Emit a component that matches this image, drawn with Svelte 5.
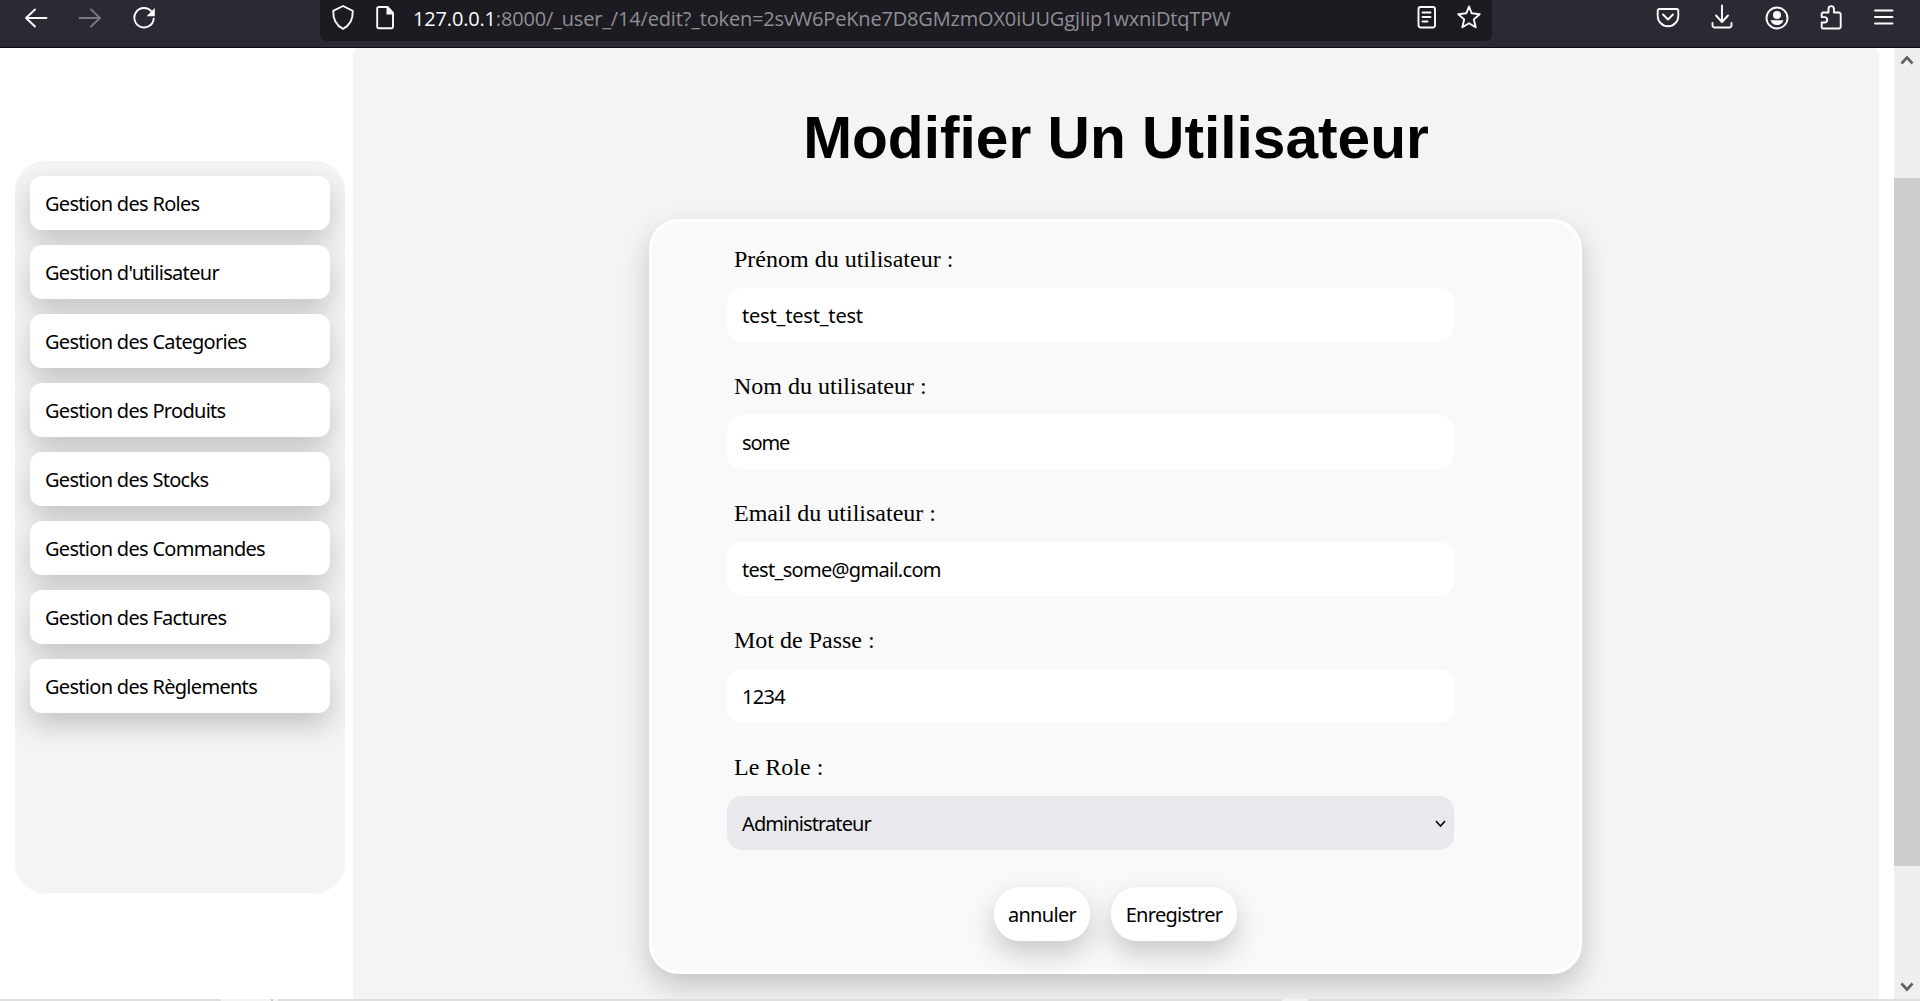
<script>
  const links = [
    'Gestion des Roles',
    "Gestion d'utilisateur",
    'Gestion des Categories',
    'Gestion des Produits',
    'Gestion des Stocks',
    'Gestion des Commandes',
    'Gestion des Factures',
    'Gestion des Règlements'
  ];

  let fields = $state([
    { id: 'prenom', label: 'Prénom du utilisateur :', value: 'test_test_test' },
    { id: 'nom', label: 'Nom du utilisateur :', value: 'some' },
    { id: 'email', label: 'Email du utilisateur :', value: 'test_some@gmail.com' },
    { id: 'passe', label: 'Mot de Passe :', value: '1234' }
  ]);
</script>

<div class="window">
  <header class="toolbar">
    <div class="nav">
      <svg width="24" height="26" viewBox="0 0 24 26"><path d="M22.500 13H2M11 4.500L2 13l9 8.500" /></svg>
      <svg class="dim" width="24" height="26" viewBox="0 0 24 26"><path d="M1.500 13H22M13 4.500L22 13l-9 8.500" /></svg>
      <svg width="24" height="26" viewBox="0 0 24 26">
        <path d="M19.500 6.500A9.700 9.700 0 1 0 21.700 13.800" />
        <path class="solid" d="M22.800 3v8.200h-8.200z" />
      </svg>
    </div>
    <div class="url">
      <svg width="24" height="26" viewBox="0 0 24 26"><path d="M12 2L21.800 6.800C22 15 19 21.500 12 24.800C5 21.500 2 15 2.200 6.800Z" /></svg>
      <svg class="page" width="20" height="26" viewBox="0 0 20 26">
        <path d="M4 3h8.500l5.500 6v13.500a1.800 1.800 0 0 1-1.800 1.800H4A1.800 1.800 0 0 1 2.200 22.500v-17.700A1.800 1.800 0 0 1 4 3z" />
        <path class="solid" d="M11.500 3v7.500H18.500z" />
      </svg>
      <span class="address"><b>127.0.0.1</b>:8000/_user_/14/edit?_token=2svW6PeKne7D8GMzmOX0iUUGgjIip1wxniDtqTPW</span>
      <svg width="20" height="26" viewBox="0 0 20 26">
        <rect x="1.500" y="3" width="16.500" height="20.500" rx="2.200" />
        <path d="M5.500 8.500h8M5.500 13h8M5.500 17.500h5" />
      </svg>
      <svg class="star" width="24" height="26" viewBox="0 0 24 26">
        <path d="M12 2.500L14.700 9.300L22.700 10.200L16.800 15.400L18.700 23.300L12 19.300L5.300 23.300L7.200 15.400L1.300 10.200L9.300 9.300Z" />
      </svg>
    </div>
    <div class="tools">
      <svg width="24" height="26" viewBox="0 0 24 26">
        <path d="M3.500 5h17a1.800 1.800 0 0 1 1.800 1.800V12a10.300 10.300 0 0 1-20.600 0V6.800A1.800 1.800 0 0 1 3.500 5z" />
        <path d="M7 10.500l5 5 5-5" />
      </svg>
      <svg width="24" height="26" viewBox="0 0 24 26"><path d="M11 1.500v16M5 11.500l6 6.500 6-6.500M1.500 19v2.200a2.300 2.300 0 0 0 2.300 2.300h14.400a2.300 2.300 0 0 0 2.300-2.300V19" /></svg>
      <svg width="24" height="26" viewBox="0 0 24 26">
        <circle cx="12" cy="14" r="10.500" />
        <circle class="fill" cx="12" cy="11" r="4" />
        <path class="fill" d="M5.500 16.200h13a6.800 6.800 0 0 1-13 0z" />
      </svg>
      <svg width="24" height="26" viewBox="0 0 24 26">
        <path d="M3 8.500h5.500V4.800a2.700 2.700 0 0 1 5.400 0v3.700h5a1.800 1.800 0 0 1 1.800 1.800v12.400a1.800 1.800 0 0 1-1.800 1.800H3a1.300 1.300 0 0 1-1.300-1.300V18.500h2.800a2.700 2.700 0 0 0 0-5.400H1.700V9.800A1.300 1.300 0 0 1 3 8.500z" />
      </svg>
      <svg width="20" height="26" viewBox="0 0 20 26"><path d="M1 6.500h17.500M1 13h17.500M1 19.500h17.500" /></svg>
    </div>
  </header>

  <div class="body">
    <aside>
      <nav class="menu">
        {#each links as link}
          <a href="#top">{link}</a>
        {/each}
      </nav>
    </aside>

    <main>
      <h1>Modifier Un Utilisateur</h1>
      <form>
        {#each fields as field}
          <div class="field">
            <label for={field.id}>{field.label}</label>
            <input id={field.id} class={field.id} type="text" bind:value={field.value} />
          </div>
        {/each}
        <div class="field">
          <label for="role">Le Role :</label>
          <button id="role" type="button" class="select">
            <span>Administrateur</span>
            <svg width="11" height="8" viewBox="0 0 11 8"><path d="M1 1l4.500 5L10 1" /></svg>
          </button>
        </div>
        <div class="actions">
          <button type="button" class="cancel">annuler</button>
          <button type="button" class="save">Enregistrer</button>
        </div>
      </form>
    </main>

    <div class="scrollbar">
      <svg width="14" height="12" viewBox="0 0 14 12"><path d="M1.500 9.500L7 3.500l5.500 6" /></svg>
      <div class="track"><div class="thumb"></div></div>
      <svg width="14" height="12" viewBox="0 0 14 12"><path d="M1.500 2.500L7 8.500l5.500-6" /></svg>
    </div>
  </div>

  <footer>
    <i class="tab-a"></i><i class="tab-line"></i><i class="tab-b"></i><i class="tab-c"></i>
  </footer>
</div>

<style>
  :global(body) { margin: 0; overflow: hidden; background: #fff; }
  * { box-sizing: border-box; }
  .window { width: 1920px; height: 1001px; display: flex; flex-direction: column; overflow: hidden; }

  .toolbar {
    flex: none; height: 48px; display: flex; align-items: flex-start;
    background: #2b2a33; border-bottom: 1px solid #0c0c0d;
  }
  .toolbar svg {
    flex: none; display: block; fill: none; stroke: #fbfbfe; stroke-width: 1.900;
    stroke-linecap: round; stroke-linejoin: round;
  }
  .toolbar .solid { fill: #fbfbfe; stroke: none; }
  .toolbar .fill { fill: #fbfbfe; stroke: none; }
  .toolbar .dim { stroke: #78777d; }
  .nav { width: 320px; padding: 5px 0 0 24px; display: flex; gap: 30px; }
  .url {
    width: 1172px; height: 41px; padding: 4px 11px 0; display: flex;
    background: #1c1b22; border-radius: 0 0 6px 6px;
  }
  .url .page { margin-left: 20px; }
  .address {
    flex: 1; margin-left: 18px; white-space: nowrap; color: #8f8f94;
    font: 20px/30px "Open Sans", "Noto Sans", sans-serif; letter-spacing: -0.170px;
  }
  .address b { font-weight: 400; color: #fbfbfe; }
  .url .star { margin-left: 20px; }
  .tools { padding: 4px 0 0 164px; display: flex; gap: 30.500px; }

  .body { flex: 1; min-height: 0; display: flex; overflow: hidden; }
  aside { width: 353px; padding: 113px 8px 0 15px; }
  .menu {
    height: 732px; padding: 15px; display: flex; flex-direction: column; gap: 15px;
    background: #f4f4f4; border-radius: 30px; overflow: hidden;
  }
  .menu a {
    height: 54px; padding: 0 15px; border-radius: 12px; background: #fff; color: #000;
    text-decoration: none; box-shadow: 0 12px 28px rgba(0, 0, 0, 0.2);
  }
  .menu a, input, .select, .actions button {
    font: 20px/56px "Noto Sans", "Open Sans", sans-serif; letter-spacing: -0.700px;
  }

  main {
    width: 1526px; height: 1000px; margin-top: -5px; padding-right: 1px;
    display: flex; flex-direction: column; align-items: center;
    background: #f4f4f4; border-radius: 15px;
  }
  h1 {
    margin: 61px 0 0; height: 115px; padding-left: 1px; white-space: nowrap;
    font: bold 58.670px/68px "Liberation Sans", Arial, sans-serif;
  }
  form {
    width: 933px; height: 755px; padding: 23px 75px 0; background: #f9f9f9;
    border: 3px solid #fff; border-radius: 30px; box-shadow: 0 12px 28px rgba(0, 0, 0, 0.2);
  }
  .field { width: 727px; height: 127px; }
  .field label {
    display: block; height: 43px; padding-left: 7px; white-space: nowrap;
    font: 24px/28px "Liberation Serif", "Times New Roman", serif;
  }
  input, .select {
    display: block; width: 727px; height: 54px; padding: 2px 15px 0; border: 0; outline: 0;
    border-radius: 15px; background: #fff; color: #000;
  }
  .prenom { letter-spacing: -0.200px; }
  .nom { letter-spacing: -1.100px; }
  .select {
    display: flex; align-items: center; justify-content: space-between;
    padding: 2px 8px 0 15px; background: #e9e9ed; line-height: 28px; letter-spacing: -0.900px;
  }
  .select svg { fill: none; stroke: #000; stroke-width: 1.600; }
  .actions { margin-top: 7px; display: flex; justify-content: center; gap: 21px; }
  .actions button {
    height: 54px; padding: 2px 0 0; border: 0; border-radius: 26px; background: #fff; color: #000;
    line-height: 28px; box-shadow: 0 12px 28px rgba(0, 0, 0, 0.2);
  }
  .cancel { width: 96px; }
  .save { width: 126px; }

  .scrollbar {
    width: 26px; margin-left: 15px; padding: 6px 0; display: flex; flex-direction: column;
    align-items: center; background: #efefef;
  }
  .scrollbar svg { flex: none; fill: none; stroke: #606060; stroke-width: 2.600; }
  .track { flex: 1; width: 26px; padding-top: 112px; }
  .thumb { height: 688px; background: #cdcdcd; }

  footer { flex: none; height: 2px; display: flex; background: #dedede; }
  .tab-a { width: 50px; margin-left: 221px; background: #f3f3f3; }
  .tab-line { width: 2px; background: #c8c8c8; }
  .tab-b { width: 5px; background: #f3f3f3; }
  .tab-c { width: 26px; margin-left: 1004px; background: #f3f3f3; }
</style>
